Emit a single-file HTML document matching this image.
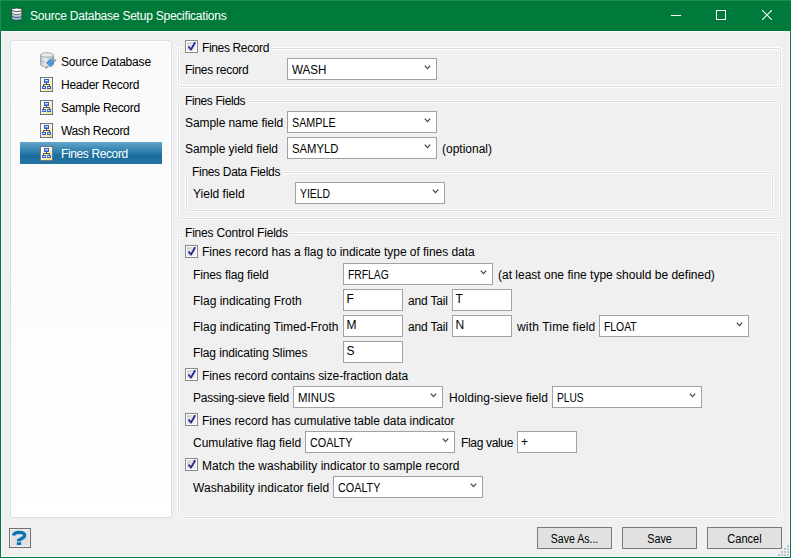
<!DOCTYPE html>
<html><head><meta charset="utf-8"><style>
*{box-sizing:border-box;margin:0;padding:0}
html,body{width:791px;height:558px;overflow:hidden;background:#f0f0f0}
body{position:relative;font-family:"Liberation Sans",sans-serif;font-size:12px;color:#000}
.a{position:absolute}
.t{position:absolute;white-space:pre;line-height:14px;height:14px}
.tt{position:absolute;white-space:pre;line-height:14px;height:14px;color:#fff;letter-spacing:-0.23px}
.lt{position:absolute;white-space:pre;line-height:14px;height:14px;color:#fff}
#win{position:absolute;left:0;top:0;width:791px;height:558px;border:1px solid #007a3a;border-top:none;background:#f0f0f0}
#title{position:absolute;left:0;top:0;width:791px;height:31px;background:#007a3a}
.grp{position:absolute;border:1px solid #d5dfe5;border-radius:3px;box-shadow:0 0 0 1px #fff,inset 0 0 0 1px #fff}
.lg{position:absolute;background:#f0f0f0;white-space:pre;line-height:14px;height:14px;padding:0 3px 0 2px}
.cb{position:absolute;width:150px;height:22px;background:#fff;border:1px solid #a0a0a5}
.tb{position:absolute;width:60px;height:22px;background:#fff;border:1px solid #a0a0a5}
.cb span,.tb span{position:absolute;left:4px;top:4px;white-space:pre;line-height:14px;transform-origin:0 0}
.tb span{left:2.5px;top:2px}
.arr{position:absolute;right:5px;top:6px}
.chk{position:absolute;width:13px;height:13px;border:1px solid #8a8a8a;background:#fff}
.chk i{position:absolute;left:1px;top:1px;width:9px;height:9px;background:linear-gradient(135deg,#cfd3da,#f4f5f7)}
.chk svg{position:absolute;left:-1px;top:-1px}
.btn{position:absolute;width:75px;height:22px;background:#e1e1e1;border:1px solid #7a7a7a}
.btn span{position:absolute;left:0;right:0;top:4px;text-align:center;white-space:pre;line-height:14px}
#left{position:absolute;left:10px;top:40px;width:162px;height:478px;border:1px solid #d5dfe5;border-radius:3px;background:linear-gradient(#f9f9f9,#fff);box-shadow:inset 0 0 0 1px #fff}
</style></head><body>
<svg width="0" height="0" style="position:absolute"><defs><linearGradient id="og" x1="0" y1="0" x2="1" y2="1"><stop offset="0" stop-color="#ffffff"/><stop offset="0.5" stop-color="#fff6c4"/><stop offset="1" stop-color="#f5d55a"/></linearGradient><linearGradient id="dbg" x1="0" y1="0" x2="0" y2="1"><stop offset="0" stop-color="#ffffff"/><stop offset="0.4" stop-color="#f6f9fb"/><stop offset="0.58" stop-color="#9cc9e6"/><stop offset="1" stop-color="#8fc2e4"/></linearGradient><linearGradient id="cyl" x1="0" y1="0" x2="1" y2="0"><stop offset="0" stop-color="#b9c4cc"/><stop offset="0.35" stop-color="#e9eef1"/><stop offset="1" stop-color="#b5c0c9"/></linearGradient></defs></svg>
<div id="win"></div><div id="title"></div>
<div class="a" style="left:0;top:0;width:791px;height:1px;background:#1f8a52"></div><div class="a" style="left:0;top:0;width:1px;height:31px;background:#1f8a52"></div><div class="a" style="left:1px;top:31px;width:789px;height:1px;background:#fcf9fc"></div><div class="a" style="left:1px;top:31px;width:1px;height:526px;background:#fcf9fc"></div><div class="a" style="left:789px;top:31px;width:1px;height:526px;background:#fcf9fc"></div><div class="a" style="left:1px;top:556px;width:789px;height:1px;background:#fcf9fc"></div>
<svg class="a" style="left:11px;top:7px" width="12" height="16" viewBox="0 0 12 16">
<path d="M0.7 2.8V11.6A5.1 1.8 0 0 0 10.9 11.6V2.8" fill="url(#dbg)" stroke="#333" stroke-width="0.9"/>
<path d="M0.7 5.7A5.1 1.8 0 0 0 10.9 5.7M0.7 8.7A5.1 1.8 0 0 0 10.9 8.7" fill="none" stroke="#555" stroke-width="0.9"/>
<ellipse cx="5.8" cy="2.8" rx="5.1" ry="1.8" fill="#fff" stroke="#333" stroke-width="0.9"/>
</svg>
<div class="tt" style="left:30px;top:9px;">Source Database Setup Specifications</div>
<div class="a" style="left:671px;top:15px;width:10px;height:1px;background:#fff"></div>
<div class="a" style="left:716px;top:10px;width:10px;height:10px;border:1px solid #fff"></div>
<svg class="a" style="left:762px;top:10px" width="10" height="10" viewBox="0 0 10 10"><path d="M0 0L10 10M10 0L0 10" stroke="#fff" stroke-width="1.1"/></svg>
<div id="left"></div>
<div class="a" style="left:20px;top:142px;width:142px;height:22px;background:linear-gradient(#64a4c8,#2c7fae 45%,#1a6d9b 62%,#2575a3)"></div>
<svg class="a" style="left:40px;top:52px" width="17" height="17" viewBox="0 0 17 17">
<path d="M0.5 3V12.5A6.5 2.3 0 0 0 13.5 12.5V3" fill="url(#cyl)" stroke="#9aa6b0" stroke-width="0.9"/>
<path d="M0.5 8A6.5 2.3 0 0 0 13.5 8" fill="none" stroke="#a3aeb8" stroke-width="0.8"/>
<ellipse cx="7" cy="3" rx="6.5" ry="2.2" fill="#e6ecf0" stroke="#9aa6b0" stroke-width="0.9"/>
<path d="M12 7.5L14 5.5M14 9.5L16 7.5" stroke="#8a8a8a" stroke-width="1.5"/>
<path d="M7.5 14.5L5.5 16.5" stroke="#8a8a8a" stroke-width="1.2"/>
<path d="M6.8 11.2L10.2 7.2L14 10L10.8 14.2Z" fill="#5aaae8" stroke="#2a7ac8" stroke-width="0.9"/>
<path d="M8.6 9.4L12 12.2" stroke="#2a6fb8" stroke-width="0.8"/>
</svg>
<div class="t" style="left:61px;top:55px;letter-spacing:-0.19px;">Source Database</div>
<svg class="a" style="left:40px;top:77px" width="13" height="15" viewBox="0 0 13 15"><rect x="0.5" y="0.5" width="12" height="14" fill="url(#og)" stroke="#4d5b72"/><rect x="1" y="1" width="11" height="13" fill="none" stroke="#fff" stroke-opacity="0.6" stroke-width="0.6"/><rect x="4" y="2" width="5" height="4" fill="#2a5fd6"/><rect x="5" y="3" width="3" height="1.4" fill="#cfe0ff"/><path d="M6.5 6V7.5M3.5 7.5H9.5M3.5 7.3V9M9.5 7.3V9" stroke="#3c4250" stroke-width="0.9" fill="none"/><rect x="2" y="9" width="4" height="3" fill="#2a5fd6"/><rect x="7" y="9" width="4" height="3" fill="#2a5fd6"/><rect x="2.7" y="10" width="2.4" height="1" fill="#cfe0ff"/><rect x="7.7" y="10" width="2.4" height="1" fill="#cfe0ff"/></svg>
<div class="t" style="left:61px;top:78px;letter-spacing:-0.25px;">Header Record</div>
<svg class="a" style="left:40px;top:100px" width="13" height="15" viewBox="0 0 13 15"><rect x="0.5" y="0.5" width="12" height="14" fill="url(#og)" stroke="#4d5b72"/><rect x="1" y="1" width="11" height="13" fill="none" stroke="#fff" stroke-opacity="0.6" stroke-width="0.6"/><rect x="4" y="2" width="5" height="4" fill="#2a5fd6"/><rect x="5" y="3" width="3" height="1.4" fill="#cfe0ff"/><path d="M6.5 6V7.5M3.5 7.5H9.5M3.5 7.3V9M9.5 7.3V9" stroke="#3c4250" stroke-width="0.9" fill="none"/><rect x="2" y="9" width="4" height="3" fill="#2a5fd6"/><rect x="7" y="9" width="4" height="3" fill="#2a5fd6"/><rect x="2.7" y="10" width="2.4" height="1" fill="#cfe0ff"/><rect x="7.7" y="10" width="2.4" height="1" fill="#cfe0ff"/></svg>
<div class="t" style="left:61px;top:101px;letter-spacing:-0.3px;">Sample Record</div>
<svg class="a" style="left:40px;top:123px" width="13" height="15" viewBox="0 0 13 15"><rect x="0.5" y="0.5" width="12" height="14" fill="url(#og)" stroke="#4d5b72"/><rect x="1" y="1" width="11" height="13" fill="none" stroke="#fff" stroke-opacity="0.6" stroke-width="0.6"/><rect x="4" y="2" width="5" height="4" fill="#2a5fd6"/><rect x="5" y="3" width="3" height="1.4" fill="#cfe0ff"/><path d="M6.5 6V7.5M3.5 7.5H9.5M3.5 7.3V9M9.5 7.3V9" stroke="#3c4250" stroke-width="0.9" fill="none"/><rect x="2" y="9" width="4" height="3" fill="#2a5fd6"/><rect x="7" y="9" width="4" height="3" fill="#2a5fd6"/><rect x="2.7" y="10" width="2.4" height="1" fill="#cfe0ff"/><rect x="7.7" y="10" width="2.4" height="1" fill="#cfe0ff"/></svg>
<div class="t" style="left:61px;top:124px;letter-spacing:-0.35px;">Wash Record</div>
<svg class="a" style="left:40px;top:146px" width="13" height="15" viewBox="0 0 13 15"><rect x="0.5" y="0.5" width="12" height="14" fill="url(#og)" stroke="#4d5b72"/><rect x="1" y="1" width="11" height="13" fill="none" stroke="#fff" stroke-opacity="0.6" stroke-width="0.6"/><rect x="4" y="2" width="5" height="4" fill="#2a5fd6"/><rect x="5" y="3" width="3" height="1.4" fill="#cfe0ff"/><path d="M6.5 6V7.5M3.5 7.5H9.5M3.5 7.3V9M9.5 7.3V9" stroke="#3c4250" stroke-width="0.9" fill="none"/><rect x="2" y="9" width="4" height="3" fill="#2a5fd6"/><rect x="7" y="9" width="4" height="3" fill="#2a5fd6"/><rect x="2.7" y="10" width="2.4" height="1" fill="#cfe0ff"/><rect x="7.7" y="10" width="2.4" height="1" fill="#cfe0ff"/></svg>
<div class="lt" style="left:61px;top:147px;letter-spacing:-0.38px;">Fines Record</div>
<div class="grp" style="left:178px;top:48px;width:603px;height:39px"></div>
<div class="grp" style="left:178px;top:101px;width:603px;height:118px"></div>
<div class="grp" style="left:186px;top:172px;width:587px;height:39px"></div>
<div class="grp" style="left:178px;top:233px;width:603px;height:285px"></div>
<div class="a" style="left:183px;top:38px;width:88px;height:16px;background:#f0f0f0"></div>
<div class="chk" style="left:185px;top:40px"><i></i><svg width="13" height="13" viewBox="0 0 13 13"><path d="M4 7.2L6 9.6L9.9 2.8" fill="none" stroke="#2d2d8f" stroke-width="1.9" stroke-linecap="round" stroke-linejoin="round"/></svg></div>
<div class="t" style="left:202px;top:41px;letter-spacing:-0.36px;">Fines Record</div>
<div class="t" style="left:185px;top:63px;letter-spacing:-0.27px;">Fines record</div>
<div class="cb" style="left:287px;top:58px;width:150px"><span style="transform:scaleX(0.97)">WASH</span><svg class="arr" width="7" height="5" viewBox="0 0 7 5"><path d="M0.8 0.6L3.5 3.6L6.2 0.6" fill="none" stroke="#444" stroke-width="1.25"/></svg></div>
<div class="lg" style="left:183px;top:94px;letter-spacing:-0.38px;">Fines Fields</div>
<div class="t" style="left:185px;top:116px;letter-spacing:-0.075px;">Sample name field</div>
<div class="cb" style="left:287px;top:111px;width:150px"><span style="transform:scaleX(0.895)">SAMPLE</span><svg class="arr" width="7" height="5" viewBox="0 0 7 5"><path d="M0.8 0.6L3.5 3.6L6.2 0.6" fill="none" stroke="#444" stroke-width="1.25"/></svg></div>
<div class="t" style="left:185px;top:142px;letter-spacing:-0.06px;">Sample yield field</div>
<div class="cb" style="left:287px;top:137px;width:150px"><span style="transform:scaleX(0.94)">SAMYLD</span><svg class="arr" width="7" height="5" viewBox="0 0 7 5"><path d="M0.8 0.6L3.5 3.6L6.2 0.6" fill="none" stroke="#444" stroke-width="1.25"/></svg></div>
<div class="t" style="left:442px;top:142px;">(optional)</div>
<div class="lg" style="left:190px;top:165px;letter-spacing:-0.31px;">Fines Data Fields</div>
<div class="t" style="left:193px;top:187px;">Yield field</div>
<div class="cb" style="left:295px;top:182px;width:150px"><span style="transform:scaleX(0.865)">YIELD</span><svg class="arr" width="7" height="5" viewBox="0 0 7 5"><path d="M0.8 0.6L3.5 3.6L6.2 0.6" fill="none" stroke="#444" stroke-width="1.25"/></svg></div>
<div class="lg" style="left:183px;top:226px;letter-spacing:-0.19px;">Fines Control Fields</div>
<div class="chk" style="left:185px;top:245px"><i></i><svg width="13" height="13" viewBox="0 0 13 13"><path d="M4 7.2L6 9.6L9.9 2.8" fill="none" stroke="#2d2d8f" stroke-width="1.9" stroke-linecap="round" stroke-linejoin="round"/></svg></div>
<div class="t" style="left:202px;top:245px;letter-spacing:-0.04px;">Fines record has a flag to indicate type of fines data</div>
<div class="t" style="left:193px;top:268px;letter-spacing:-0.12px;">Fines flag field</div>
<div class="cb" style="left:343px;top:263px;width:150px"><span style="transform:scaleX(0.86)">FRFLAG</span><svg class="arr" width="7" height="5" viewBox="0 0 7 5"><path d="M0.8 0.6L3.5 3.6L6.2 0.6" fill="none" stroke="#444" stroke-width="1.25"/></svg></div>
<div class="t" style="left:498px;top:268px;">(at least one fine type should be defined)</div>
<div class="t" style="left:193px;top:294px;">Flag indicating Froth</div>
<div class="tb" style="left:343px;top:289px;width:60px"><span>F</span></div>
<div class="t" style="left:408px;top:294px;letter-spacing:-0.18px;">and Tail</div>
<div class="tb" style="left:452px;top:289px;width:60px"><span>T</span></div>
<div class="t" style="left:193px;top:320px;">Flag indicating Timed-Froth</div>
<div class="tb" style="left:343px;top:315px;width:60px"><span>M</span></div>
<div class="t" style="left:408px;top:320px;letter-spacing:-0.18px;">and Tail</div>
<div class="tb" style="left:452px;top:315px;width:60px"><span>N</span></div>
<div class="t" style="left:517px;top:320px;letter-spacing:0.16px;">with Time field</div>
<div class="cb" style="left:599px;top:315px;width:150px"><span style="transform:scaleX(0.865)">FLOAT</span><svg class="arr" width="7" height="5" viewBox="0 0 7 5"><path d="M0.8 0.6L3.5 3.6L6.2 0.6" fill="none" stroke="#444" stroke-width="1.25"/></svg></div>
<div class="t" style="left:193px;top:346px;letter-spacing:-0.11px;">Flag indicating Slimes</div>
<div class="tb" style="left:343px;top:341px;width:60px"><span>S</span></div>
<div class="chk" style="left:185px;top:368px"><i></i><svg width="13" height="13" viewBox="0 0 13 13"><path d="M4 7.2L6 9.6L9.9 2.8" fill="none" stroke="#2d2d8f" stroke-width="1.9" stroke-linecap="round" stroke-linejoin="round"/></svg></div>
<div class="t" style="left:202px;top:369px;letter-spacing:-0.085px;">Fines record contains size-fraction data</div>
<div class="t" style="left:193px;top:391px;letter-spacing:-0.22px;">Passing-sieve field</div>
<div class="cb" style="left:293px;top:386px;width:150px"><span style="transform:scaleX(0.95)">MINUS</span><svg class="arr" width="7" height="5" viewBox="0 0 7 5"><path d="M0.8 0.6L3.5 3.6L6.2 0.6" fill="none" stroke="#444" stroke-width="1.25"/></svg></div>
<div class="t" style="left:449px;top:391px;letter-spacing:0.05px;">Holding-sieve field</div>
<div class="cb" style="left:552px;top:386px;width:150px"><span style="transform:scaleX(0.85)">PLUS</span><svg class="arr" width="7" height="5" viewBox="0 0 7 5"><path d="M0.8 0.6L3.5 3.6L6.2 0.6" fill="none" stroke="#444" stroke-width="1.25"/></svg></div>
<div class="chk" style="left:185px;top:413px"><i></i><svg width="13" height="13" viewBox="0 0 13 13"><path d="M4 7.2L6 9.6L9.9 2.8" fill="none" stroke="#2d2d8f" stroke-width="1.9" stroke-linecap="round" stroke-linejoin="round"/></svg></div>
<div class="t" style="left:202px;top:414px;letter-spacing:-0.047px;">Fines record has cumulative table data indicator</div>
<div class="t" style="left:193px;top:436px;">Cumulative flag field</div>
<div class="cb" style="left:305px;top:431px;width:150px"><span style="transform:scaleX(0.9)">COALTY</span><svg class="arr" width="7" height="5" viewBox="0 0 7 5"><path d="M0.8 0.6L3.5 3.6L6.2 0.6" fill="none" stroke="#444" stroke-width="1.25"/></svg></div>
<div class="t" style="left:461px;top:436px;letter-spacing:-0.34px;">Flag value</div>
<div class="tb" style="left:517px;top:431px;width:60px"><span style="top:3px;left:3px">+</span></div>
<div class="chk" style="left:185px;top:458px"><i></i><svg width="13" height="13" viewBox="0 0 13 13"><path d="M4 7.2L6 9.6L9.9 2.8" fill="none" stroke="#2d2d8f" stroke-width="1.9" stroke-linecap="round" stroke-linejoin="round"/></svg></div>
<div class="t" style="left:202px;top:459px;letter-spacing:0.026px;">Match the washability indicator to sample record</div>
<div class="t" style="left:193px;top:481px;letter-spacing:0.05px;">Washability indicator field</div>
<div class="cb" style="left:333px;top:476px;width:150px"><span style="transform:scaleX(0.9)">COALTY</span><svg class="arr" width="7" height="5" viewBox="0 0 7 5"><path d="M0.8 0.6L3.5 3.6L6.2 0.6" fill="none" stroke="#444" stroke-width="1.25"/></svg></div>
<div class="btn" style="left:537px;top:527px"><span style="transform:scaleX(0.88)">Save As...</span></div>
<div class="btn" style="left:622px;top:527px"><span style="transform:scaleX(0.9)">Save</span></div>
<div class="btn" style="left:707px;top:527px"><span style="transform:scaleX(0.92)">Cancel</span></div>
<div class="a" style="left:9px;top:528px;width:22px;height:20px;background:#e1e1e1;border:1px solid #6f6f6f;box-shadow:inset 0 0 0 1px #f0f0f0"></div>
<svg class="a" style="left:9px;top:528px" width="22" height="20" viewBox="9 528 22 20"><path d="M13.6 535.5C13.9 532.9 16.4 532.3 19.2 532.3C22.4 532.3 24.6 533.2 24.6 535.4C24.6 537.5 22.4 538.1 20.8 539C19.8 539.5 19.2 539.9 19 540.4" fill="none" stroke="#0b73b2" stroke-width="3.3"/><rect x="16.9" y="539.2" width="4.1" height="2.1" fill="#0b73b2"/><rect x="16.8" y="542.2" width="4.3" height="2.8" fill="#0b73b2"/></svg>
<div class="a" style="left:787px;top:545px;width:2px;height:2px;background:#b9c3d6"></div><div class="a" style="left:787px;top:548px;width:2px;height:2px;background:#b9c3d6"></div><div class="a" style="left:784px;top:548px;width:2px;height:2px;background:#b9c3d6"></div><div class="a" style="left:787px;top:551px;width:2px;height:2px;background:#b9c3d6"></div><div class="a" style="left:784px;top:551px;width:2px;height:2px;background:#b9c3d6"></div><div class="a" style="left:781px;top:551px;width:2px;height:2px;background:#b9c3d6"></div><div class="a" style="left:787px;top:554px;width:2px;height:2px;background:#b9c3d6"></div><div class="a" style="left:784px;top:554px;width:2px;height:2px;background:#b9c3d6"></div><div class="a" style="left:781px;top:554px;width:2px;height:2px;background:#b9c3d6"></div><div class="a" style="left:778px;top:554px;width:2px;height:2px;background:#b9c3d6"></div>
</body></html>
